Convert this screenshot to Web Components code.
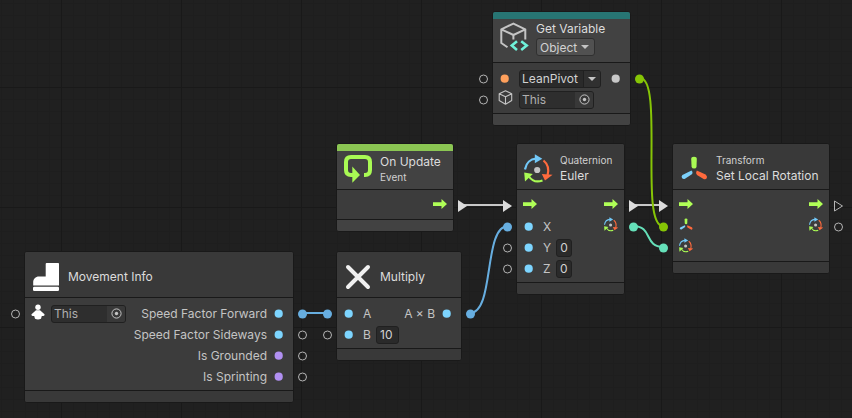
<!DOCTYPE html>
<html lang="en">
<head>
<meta charset="utf-8">
<title>Script Graph</title>
<style>
  html, body { margin: 0; height: 100%; background: #202020; }
  body { font-family: Inter, "Liberation Sans", sans-serif; font-size: 12px; color: #c4c4c4; }
</style>
</head>
<body>
<graph-canvas>
  <flow-node style="left:492px;top:11px;min-width:139px" tone="light" accent="#277573" icon="variable" heading="Get Variable">
    <kind-select slot="extra" label="Variable kind" value="Object"></kind-select>
    <port-row in-port="ring" in-icon="dot" in-color="#ffa05c" out-icon="dot" out-color="#c8c8c8" out-port="disc" wire="#86c506">
      <name-field label="Variable name" value="LeanPivot"></name-field>
    </port-row>
    <port-row in-port="ring" in-icon="cube"><object-field label="Source object" value="This"></object-field></port-row>
  </flow-node>

  <flow-node style="left:336px;top:143px;min-width:118px" tone="light" accent="#8bc653" icon="loop" heading="On Update" below="Event">
    <port-row out-icon="flow" out-port="exec"></port-row>
  </flow-node>

  <flow-node style="left:516px;top:143px;min-width:109px" icon="rotation" above="Quaternion" heading="Euler">
    <port-row in-port="exec" in-icon="flow" out-icon="flow" out-port="exec"></port-row>
    <port-row in-port="disc" in-wire="#67aee0" in-icon="dot" in-color="#7dd5ff" in-label="X" out-icon="rotation-small" out-port="disc" wire="#65e0b9"></port-row>
    <port-row in-port="ring" in-icon="dot" in-color="#7dd5ff"><number-field label="Y" value="0"></number-field></port-row>
    <port-row in-port="ring" in-icon="dot" in-color="#7dd5ff"><number-field label="Z" value="0"></number-field></port-row>
  </flow-node>

  <flow-node style="left:672px;top:143px;min-width:158px" icon="transform" above="Transform" heading="Set Local Rotation">
    <port-row in-port="exec" in-icon="flow" out-icon="flow" out-port="exec-open"></port-row>
    <port-row in-port="disc" in-wire="#86c506" in-icon="transform-small" out-icon="rotation-small" out-port="ring"></port-row>
    <port-row in-port="disc" in-wire="#65e0b9" in-icon="rotation-small"></port-row>
  </flow-node>

  <flow-node style="left:24px;top:251px;min-width:270px" icon="boot" heading="Movement Info">
    <port-row in-port="ring" in-icon="person" out-label="Speed Factor Forward" out-icon="dot" out-color="#7dd5ff" out-port="disc" wire="#67aee0">
      <object-field label="Movement target" value="This"></object-field>
    </port-row>
    <port-row out-label="Speed Factor Sideways" out-icon="dot" out-color="#7dd5ff" out-port="ring"></port-row>
    <port-row out-label="Is Grounded" out-icon="dot" out-color="#b190f2" out-port="ring"></port-row>
    <port-row out-label="Is Sprinting" out-icon="dot" out-color="#b190f2" out-port="ring"></port-row>
  </flow-node>

  <flow-node style="left:336px;top:251px;min-width:126px" icon="multiply" heading="Multiply">
    <port-row in-port="disc" in-wire="#67aee0" in-icon="dot" in-color="#7dd5ff" in-label="A" out-label="A × B" out-icon="dot" out-color="#7dd5ff" out-port="disc" wire="#67aee0"></port-row>
    <port-row in-port="ring" in-icon="dot" in-color="#7dd5ff"><number-field label="B" value="10"></number-field></port-row>
  </flow-node>
</graph-canvas>

<script>
const svg = (box, body, x = 0) => `<svg viewBox="${x} 0 ${box} ${box}" aria-hidden="true">${body}</svg>`;

const ROTATION = (w) => `
  <g fill="none" stroke-width="${w}">
    <path stroke="#72c8f8" d="M1 15.5C2 9 6.500 5 12 4.700"/>
    <path stroke="#ff6a3d" d="M19.500 6.500C23.800 10 25.300 15 23.500 21.500"/>
    <path stroke="#a9fa54" d="M5 22.500C8 27 13 28.500 18.500 26.500"/>
  </g>
  <path fill="#72c8f8" d="M10.800 0.300V9.300L18.300 4.800Z"/>
  <path fill="#ff6a3d" d="M17.800 20L28.600 20.800L21 26.600Z"/>
  <path fill="#a9fa54" d="M0.200 18.500L8.800 20L1 27.600Z"/>
  <circle cx="13.200" cy="16" r="3.100" fill="#c4c4c4"/>`;

const TRANSFORM = `
  <path fill="#a9fa54" d="M11.200 5Q11.200 2.800 14 2.800T16.800 5L16.500 13Q16.200 14.500 14.100 14.500T11.600 13Z"/>
  <path fill="#7dd0fa" d="M11.500 16.600Q13.200 18 12.200 20L5 24.800Q3 25.400 2 24T2.400 21Z"/>
  <path fill="#ff6a3d" d="M16.800 16.600L25.600 20.600Q27.600 22.200 26.800 24T24 25.200L17 21Q15.400 18.500 16.800 16.600Z"/>`;

const ICONS = {
  variable: svg(29, `<g fill="none" stroke="#c4c4c4" stroke-width="2" stroke-linejoin="round">
      <path d="M7.500 25.300L1.300 21V7.300L13.400 1.600L25.300 7.300V17.500M1.300 7.300L13.400 13L25.300 7.300M13.400 13V17.500"/></g>
      <path fill="none" stroke="#6ff2da" stroke-width="2.600" d="M17 19.300L11.800 23.600L17 27.900M21.200 19.300L26.700 23.600L21.200 27.900"/>`),
  cube: svg(16, `<path fill="none" stroke="#c4c4c4" stroke-width="1.100" stroke-linejoin="round" d="M8.500 0.800L2.200 3.700V10.600L8.500 14.200L14.700 10.600V3.700ZM2.200 3.700L8.500 6.800L14.700 3.700M8.500 6.800V14.200"/>`),
  loop: svg(29, `<path fill="none" stroke="#a9fa54" stroke-width="4" d="M20 21H21Q26 21 26 16V8Q26 3 21 3H7Q2 3 2 8V16Q2 21 7 21H10"/>
      <path fill="#a9fa54" d="M8.300 12.600V28.800L16 21Z"/>`),
  rotation: svg(29, ROTATION(2.2)),
  "rotation-small": svg(32, ROTATION(2.2), -4),
  transform: svg(29, TRANSFORM),
  "transform-small": svg(32, TRANSFORM, -4),
  boot: svg(29, `<path fill="#fff" d="M14.600 1H26.200Q27 1 27 1.800V23.600H1.200V20C1.200 17 3.500 14.500 7 14.500H13.700V1.900Q13.700 1 14.600 1Z"/><rect x="1" y="24.800" width="26" height="4.200" rx="1.200" fill="#fff"/>`),
  multiply: svg(29, `<path stroke="#f0f0f0" stroke-width="4" stroke-linecap="round" d="M4 5L24 25M24 5L4 25"/>`),
  person: svg(16, `<circle cx="9" cy="3.300" r="2.700" fill="#fff"/><path fill="#fff" d="M7 6.300H11L15.500 10.200Q15.800 11.800 14 12L12.800 12L12 14.800Q9 16.400 6 14.800L5.200 12L4 12Q2.200 11.800 2.500 10.200Z"/>`),
  flow: svg(16, `<path fill="#b0ff57" d="M2 4.200H10.500V1L16 6L10.500 11V8H2Z"/>`),
  dot: svg(16, `<circle cx="7.700" cy="7.700" r="4.100" fill="currentColor"/>`)
};

class FlowIcon extends HTMLElement {
  connectedCallback() {
    const root = this.attachShadow({ mode: "open" });
    root.innerHTML = `<style>
      :host { display: block; flex: none; width: 16px; height: 16px; }
      :host([large]) { width: 29px; height: 29px; }
      svg { display: block; width: 100%; height: 100%; }
    </style>${ICONS[this.getAttribute("name")] || ""}`;
  }
}
customElements.define("flow-icon", FlowIcon);

class FlowPort extends HTMLElement {
  connectedCallback() {
    const shapes = {
      ring: `<circle cx="4.500" cy="6" r="4" fill="none" stroke="#b4b4b4"/>`,
      disc: `<circle cx="4.500" cy="6" r="4.500" fill="currentColor"/>`,
      exec: `<path d="M0 0L9 6L0 12Z" fill="#dcdcdc"/>`,
      "exec-open": `<path d="M0.500 1L8.500 6L0.500 11Z" fill="none" stroke="#b4b4b4"/>`
    };
    this.attachShadow({ mode: "open" }).innerHTML = `<style>
      :host { display: block; flex: none; width: 9px; height: 12px; }
      svg { display: block; overflow: visible; }
    </style><svg width="9" height="12" aria-hidden="true">${shapes[this.getAttribute("kind")] || ""}</svg>`;
  }
}
customElements.define("flow-port", FlowPort);

const FIELD = `
  :host { display: flex; }
  input, button, select { font: inherit; color: inherit; margin: 0; padding: 0; border: 0; background: none; outline: none; }
  .box { box-sizing: border-box; display: flex; align-items: stretch; height: 18px; border: 1px solid #202020; border-radius: 3px; background: #2a2a2a; overflow: hidden; }
  input { min-width: 0; }
  svg { display: block; }
`;

class NumberField extends HTMLElement {
  connectedCallback() {
    const v = this.getAttribute("value");
    this.attachShadow({ mode: "open" }).innerHTML = `<style>${FIELD}
      label { display: flex; align-items: center; gap: 5px; }
      .name { min-width: 8px; }
      input { box-sizing: content-box; width: ${v.length}ch; padding: 0 3px; color: #d2d2d2; }
    </style><label><span class="name">${this.getAttribute("label")}</span><span class="box"><input inputmode="numeric" value="${v}"></span></label>`;
  }
}
customElements.define("number-field", NumberField);

class ObjectField extends HTMLElement {
  connectedCallback() {
    this.attachShadow({ mode: "open" }).innerHTML = `<style>${FIELD}
      .box { width: 75px; background: #2e2e2e; }
      input { flex: 1; padding-left: 2px; color: #b0b0b0; }
      button { display: grid; place-items: center; width: 18px; background: #383838; color: #c4c4c4; }
    </style><div class="box"><input aria-label="${this.getAttribute("label")}" value="${this.getAttribute("value")}" readonly>
      <button type="button" aria-label="Pick object"><svg width="11" height="11"><circle cx="5.500" cy="5.500" r="4.600" fill="none" stroke="currentColor"/><circle cx="5.500" cy="5.500" r="1.700" fill="currentColor"/></svg></button></div>`;
  }
}
customElements.define("object-field", ObjectField);

class NameField extends HTMLElement {
  connectedCallback() {
    this.attachShadow({ mode: "open" }).innerHTML = `<style>${FIELD}
      .box { width: 82px; }
      input { flex: 1; padding-left: 2px; color: #d2d2d2; }
      button { display: grid; place-items: center; width: 17px; border-left: 1px solid #202020; background: #303030; color: #c4c4c4; }
    </style><div class="box"><input aria-label="${this.getAttribute("label")}" value="${this.getAttribute("value")}">
      <button type="button" aria-label="Show variables"><svg width="8" height="4"><path d="M0 0H8L4 4Z" fill="currentColor"/></svg></button></div>`;
  }
}
customElements.define("name-field", NameField);

class KindSelect extends HTMLElement {
  connectedCallback() {
    this.attachShadow({ mode: "open" }).innerHTML = `<style>${FIELD}
      .box { position: relative; background: #515151; border-color: #303030; }
      select { appearance: none; padding: 0 16px 0 3px; color: #d2d2d2; }
      svg { position: absolute; right: 5px; top: 6px; pointer-events: none; }
    </style><div class="box"><select aria-label="${this.getAttribute("label")}"><option>${this.getAttribute("value")}</option></select>
      <svg width="8" height="4" aria-hidden="true"><path d="M0 0H8L4 4Z" fill="#c4c4c4"/></svg></div>`;
  }
}
customElements.define("kind-select", KindSelect);

class PortRow extends HTMLElement {
  connectedCallback() {
    const a = (n) => this.getAttribute(n) || "";
    const label = (n) => a(n) ? `<span>${a(n)}</span>` : "";
    this.attachShadow({ mode: "open" }).innerHTML = `<style>
      :host { display: flex; align-items: center; height: 21px; margin: 0 -14px; white-space: nowrap; }
      .side { display: flex; align-items: center; }
      .out { margin-left: auto; gap: 4px; }
      .in { gap: 6px; }
      .in flow-port { margin-right: 3px; }
      .out flow-port { margin-left: 7px; }
      flow-icon:is([name$=small], [name=cube], [name=person]) { margin-bottom: 4px; }
    </style>
    <div class="side in"><flow-port kind="${a("in-port")}" style="color:${a("in-wire")}"></flow-port><flow-icon name="${a("in-icon")}" style="color:${a("in-color")}"></flow-icon>${label("in-label")}<slot></slot></div>
    <div class="side out">${label("out-label")}<flow-icon name="${a("out-icon")}" style="color:${a("out-color")}"></flow-icon><flow-port kind="${a("out-port")}" style="color:${a("wire")}"></flow-port></div>`;
  }
}
customElements.define("port-row", PortRow);

class FlowNode extends HTMLElement {
  connectedCallback() {
    const a = (n) => this.getAttribute(n) || "";
    const small = (n) => a(n) ? `<div class="small">${a(n)}</div>` : "";
    this.attachShadow({ mode: "open" }).innerHTML = `<style>
      :host { display: block; box-sizing: border-box; position: absolute; border: 1px solid #191919; border-radius: 3px; background: #3c3c3c; --bar: #393939; }
      :host([tone=light]) { --bar: #424242; }
      header { display: flex; gap: 7px; padding: 2px 6px 5px 7px; border-top: 7px solid ${a("accent") || "transparent"}; border-bottom: 1px solid #191919; background: var(--bar); border-radius: 2px 2px 0 0; white-space: nowrap; }
      header flow-icon { margin: 1px 0; }
      :host([below]) header { padding-top: 3px; padding-bottom: 4px; }
      :host([below]) flow-icon { margin: 0; }
      .titles { display: flex; flex-direction: column; justify-content: center; color: #dcdcdc; }
      .heading { font-size: 12px; line-height: 16px; }
      .small { font-size: 10px; line-height: 15px; color: #d0d0d0; }
      ::slotted([slot=extra]) { margin: 1px 0; }
      .body { padding: 5px 0 3px; }
      footer { height: 11px; border-top: 1px solid #191919; background: var(--bar); border-radius: 0 0 2px 2px; }
    </style>
    <header><flow-icon large name="${a("icon")}"></flow-icon>
      <div class="titles">${small("above")}<div class="heading">${a("heading")}</div>${small("below")}<slot name="extra"></slot></div></header>
    <div class="body"><slot></slot></div><footer></footer>`;
  }
}
customElements.define("flow-node", FlowNode);

class GraphCanvas extends HTMLElement {
  connectedCallback() {
    this.attachShadow({ mode: "open" }).innerHTML = `<style>
      :host { display: block; position: relative; min-height: 100%; overflow: hidden;
        background:
          linear-gradient(90deg, #191919 1px, transparent 1px) 61px 0 / 120px 120px,
          linear-gradient(#191919 1px, transparent 1px) 0 87px / 120px 120px,
          linear-gradient(90deg, #1e1e1e 1px, transparent 1px) 1px 0 / 12px 12px,
          linear-gradient(#1e1e1e 1px, transparent 1px) 0 3px / 12px 12px,
          #202020; }
      svg { position: absolute; inset: 0; width: 100%; height: 100%; }
    </style>
    <svg fill="none" stroke-width="2" aria-hidden="true">
      <path stroke="#c8c8c8" d="M462 205H505M633 205H661"/>
      <path stroke="#67aee0" d="M302 313H328"/>
      <path stroke="#67aee0" d="M470 313C495 313 483 226 508 226"/>
      <path stroke="#86c506" d="M640 78C664 78 639 226 663 226"/>
      <path stroke="#65e0b9" d="M633 226C653 226 644 247 663 247"/>
    </svg><slot></slot>`;
  }
}
customElements.define("graph-canvas", GraphCanvas);
</script>
</body>
</html>
